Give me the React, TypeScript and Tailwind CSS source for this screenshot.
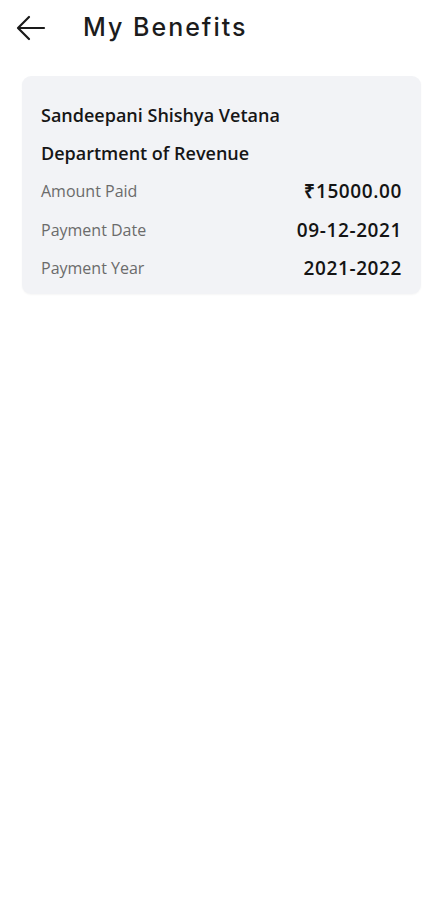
const rows = [
	{ label: "Amount Paid", value: "₹15000.00" },
	{ label: "Payment Date", value: "09-12-2021" },
	{ label: "Payment Year", value: "2021-2022" },
];

const App = () => {
	return (
		<div className="min-h-[900px] w-full bg-white font-['Open_Sans',sans-serif]">
			<header className="flex h-[56px] items-center pl-[16px]">
				<svg
					width="30"
					height="26"
					viewBox="0 0 30 26"
					fill="none"
					stroke="#1a1a1a"
					strokeWidth="2.2"
					strokeLinecap="round"
					strokeLinejoin="round"
				>
					<path d="M28 13H3" />
					<path d="M13 2L2 13l11 11" />
				</svg>
				<h1 className="ml-[37px] text-[25px] font-medium tracking-[2px] text-[#1c1c1c] font-['Inter',sans-serif]">
					My Benefits
				</h1>
			</header>
			<div className="px-[22px] pt-[20px]">
				<div className="rounded-[9px] bg-[#f2f3f6] pb-[6px] pl-[19px] pr-[19px] pt-[20px] shadow-[0_1px_2px_rgba(0,0,0,0.04)]">
					<p className="text-[18px] font-semibold leading-[38px] text-[#161616]">
						Sandeepani Shishya Vetana
					</p>
					<p className="text-[18px] font-semibold leading-[38px] text-[#161616]">
						Department of Revenue
					</p>
					{rows.map((r) => (
						<div key={r.label} className="flex items-center justify-between leading-[38.5px]">
							<span className="text-[16px] text-[#6b6b6b]">{r.label}</span>
							<span className="text-[19px] font-semibold tracking-[0.6px] text-[#141414]">{r.value}</span>
						</div>
					))}
				</div>
			</div>
		</div>
	);
};

export default App;
